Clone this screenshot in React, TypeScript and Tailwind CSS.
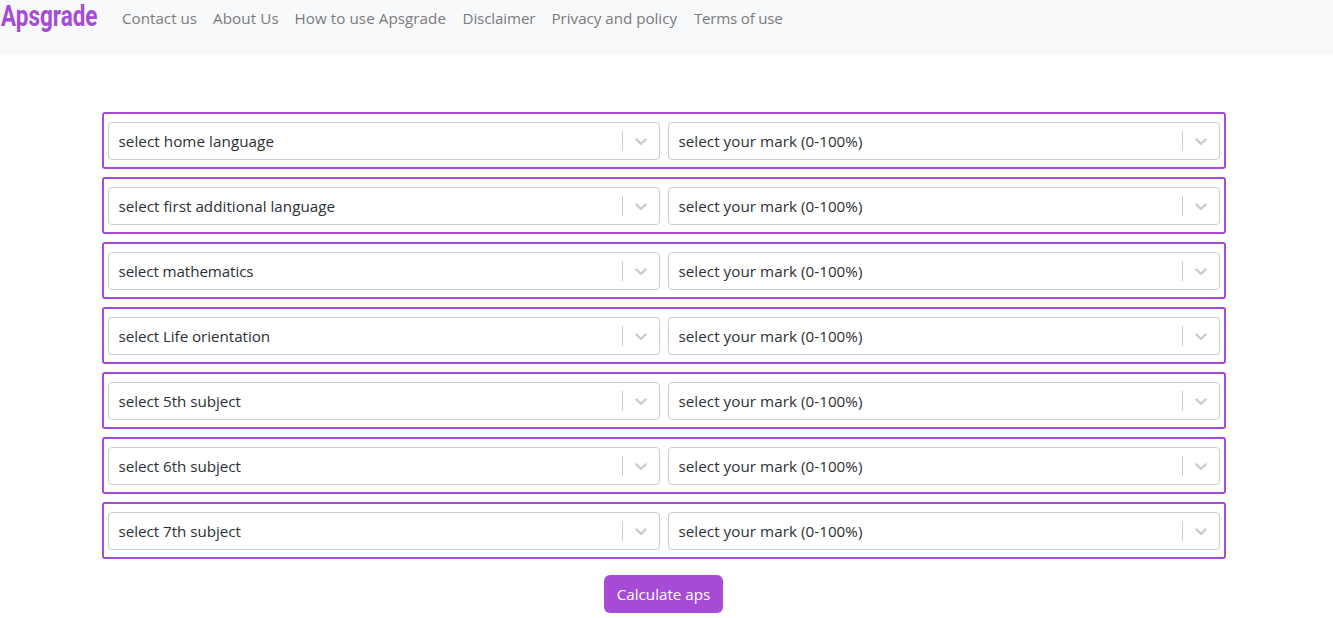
const links = [
  { label: 'Contact us', box: 'w-[91px]' },
  { label: 'About Us', box: 'w-[81.5px] tracking-[0.1px]' },
  { label: 'How to use Apsgrade', box: 'w-[168px] tracking-[0.06px]' },
  { label: 'Disclaimer', box: 'w-[89px] tracking-[-0.14px]' },
  { label: 'Privacy and policy', box: 'w-[142.5px] tracking-[-0.03px]' },
  { label: 'Terms of use', box: 'w-[105px] tracking-[-0.26px]' },
];

const subjects = [
  { label: 'select home language', spacing: 'tracking-[0.07px]' },
  { label: 'select first additional language', spacing: 'tracking-[0.03px]' },
  { label: 'select mathematics', spacing: 'tracking-[-0.1px]' },
  { label: 'select Life orientation', spacing: 'tracking-[-0.05px]' },
  { label: 'select 5th subject', spacing: 'tracking-[-0.03px]' },
  { label: 'select 6th subject', spacing: 'tracking-[-0.03px]' },
  { label: 'select 7th subject', spacing: 'tracking-[-0.03px]' },
];

function Select({ label, spacing }: { label: string; spacing: string }) {
  return (
    <div className="flex h-[38px] flex-1 items-center rounded border border-[#cccccc] bg-white">
      <span className={`${spacing} flex-1 whitespace-nowrap pl-[9.5px] text-[15.2px] leading-6 text-[#2c3034]`}>
        {label}
      </span>
      <span className="h-5 w-px bg-[#cccccc]" />
      <span className="flex w-9 justify-center">
        <svg className="h-5 w-5 fill-[#cccccc]" viewBox="0 0 20 20" aria-hidden="true">
          <path d="M4.516 7.548c0.436-0.446 1.043-0.481 1.576 0l3.908 3.747 3.908-3.747c0.533-0.481 1.141-0.446 1.574 0 0.436 0.445 0.408 1.197 0 1.615-0.406 0.418-4.695 4.502-4.695 4.502-0.217 0.223-0.502 0.335-0.787 0.335s-0.57-0.112-0.789-0.335c0 0-4.287-4.084-4.695-4.502s-0.436-1.17 0-1.615z" />
        </svg>
      </span>
    </div>
  );
}

export default function App() {
  return (
    <div className="h-[618px] overflow-hidden bg-white font-['Open_Sans','Noto_Sans',sans-serif]">
      <nav className="flex h-[55px] bg-[#f8f9fa]">
        <div className="-mt-px w-[122px] pl-px">
          <span className="inline-block origin-left scale-x-[0.775] whitespace-nowrap font-['Roboto',sans-serif] text-[29px] font-bold leading-[34px] text-[#a64bd6]">
            Apsgrade
          </span>
        </div>
        <div className="flex pt-1.5">
          {links.map((l) => (
            <a key={l.label} className={`${l.box} whitespace-nowrap text-[15.2px] leading-6 text-[#7a7b7d]`}>
              {l.label}
            </a>
          ))}
        </div>
      </nav>
      <main className="ml-[102px] mt-[57px] flex w-[1124px] flex-col gap-2">
        {subjects.map((s) => (
          <div key={s.label} className="flex h-[57px] items-center gap-2 rounded-[3px] border-2 border-[#a64bd6] px-1">
            <Select label={s.label} spacing={s.spacing} />
            <Select label="select your mark (0-100%)" spacing="tracking-[0.05px]" />
          </div>
        ))}
        <button className="ml-[502px] mt-2 h-[38px] w-[119px] whitespace-nowrap rounded-md bg-[#a64bd6] text-[15.2px] leading-6 text-white">
          Calculate aps
        </button>
      </main>
    </div>
  );
}
